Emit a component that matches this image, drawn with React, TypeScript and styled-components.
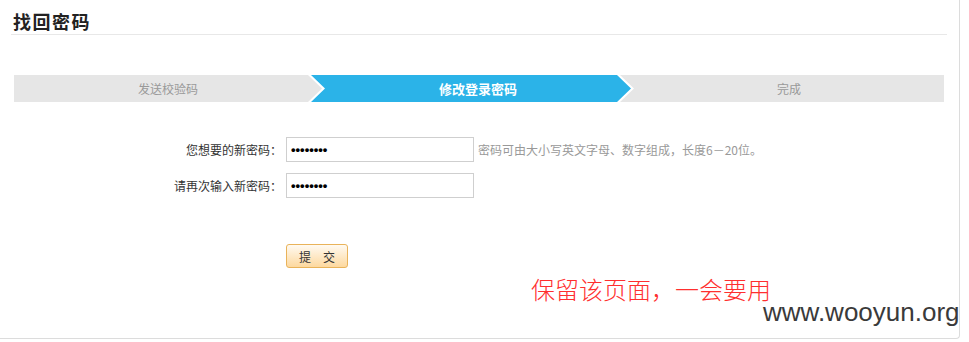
import React from 'react';
import styled, {createGlobalStyle} from "styled-components";

const GlobalStyle = createGlobalStyle`
  html, body {
    margin: 0;
    padding: 0;
    background: #fff;
    font-family: "Liberation Sans", "Noto Sans CJK SC", sans-serif;
  }
`

type StepProps = {
    active?: boolean
    first?: boolean
    last?: boolean
    w?: string
}

const steps = [
    {label: "发送校验码", w: "308px"},
    {label: "修改登录密码", w: "320px", active: true},
    {label: "完成", w: "auto"},
]

function App() {
    return (
        <>
            <GlobalStyle/>
            <Panel>
                <Header><Title>找回密码</Title></Header>

                <Steps>
                    {steps.map((s, i) => (
                        <Step key={s.label} w={s.w} active={s.active} first={i === 0}
                              last={i === steps.length - 1}>
                            {s.label}
                        </Step>
                    ))}
                </Steps>

                <Form>
                    <Row>
                        <Label>您想要的新密码：</Label>
                        <Input type="password" readOnly defaultValue="aaaaaaaa"/>
                        <Hint>密码可由大小写英文字母、数字组成，长度6－20位。</Hint>
                    </Row>
                    <Row>
                        <Label>请再次输入新密码：</Label>
                        <Input type="password" readOnly defaultValue="aaaaaaaa"/>
                    </Row>
                    <Row>
                        <Label/>
                        <Submit>提　交</Submit>
                    </Row>
                </Form>

                <Note>保留该页面，一会要用</Note>
                <Watermark>www.wooyun.org</Watermark>
            </Panel>
        </>
    );
}

export default App;

const Panel = styled.div`
  position: relative;
  box-sizing: border-box;
  width: 960px;
  height: 339px;
  padding: 0 12px 0 11px;
  border-right: 1px solid #dcdcdc;
  border-bottom: 1px solid #dcdcdc;
  border-bottom-right-radius: 4px;
`
const Header = styled.div`
  height: 35px;
  border-bottom: 1px solid #e8e8e8;
  box-sizing: border-box;
  padding: 11px 0 0 2px;
`
const Title = styled.h2`
  margin: 0;
  font-family: "Noto Sans CJK SC", sans-serif;
  font-size: 18px;
  font-weight: 700;
  line-height: 20px;
  letter-spacing: 1.5px;
  color: #222;
`
const Steps = styled.div`
  display: flex;
  margin: 40px 3px 0 3px;
  height: 27px;
`
const Step = styled.div<StepProps>`
  flex: ${p => p.w === "auto" ? "1" : `0 0 ${p.w}`};
  margin-left: ${p => p.first ? "0" : "-11px"};
  padding-left: ${p => p.first ? "0" : "14px"};
  box-sizing: border-box;
  display: flex;
  align-items: center;
  justify-content: center;
  background: ${p => p.active ? "#2bb3e8" : "#e6e6e6"};
  color: ${p => p.active ? "#fff" : "#999"};
  font-family: "Noto Sans CJK SC", sans-serif;
  font-size: ${p => p.active ? "13px" : "12px"};
  font-weight: ${p => p.active ? 700 : 400};
  clip-path: ${p => p.first
          ? "polygon(0 0, calc(100% - 14px) 0, 100% 50%, calc(100% - 14px) 100%, 0 100%)"
          : p.last
                  ? "polygon(0 0, 100% 0, 100% 100%, 0 100%, 14px 50%)"
                  : "polygon(0 0, calc(100% - 14px) 0, 100% 50%, calc(100% - 14px) 100%, 0 100%, 14px 50%)"};
`
const Form = styled.div`
  margin-top: 35px;
  display: flex;
  flex-direction: column;
  gap: 11px;

  & > div:last-child {
    margin-top: 35px;
  }
`
const Row = styled.div`
  display: flex;
  align-items: center;
  gap: 4px;
`
const Label = styled.label`
  flex: 0 0 271px;
  text-align: right;
  font-family: "Noto Sans CJK SC", sans-serif;
  font-size: 12px;
  color: #333;
`
const Input = styled.input`
  box-sizing: border-box;
  width: 188px;
  height: 25px;
  border: 1px solid #cfcfcf;
  padding: 0 4px;
  font-family: "Liberation Sans", sans-serif;
  font-size: 13px;
  font-weight: 700;
  letter-spacing: 0;
  color: #000;
  outline: none;
`
const Hint = styled.span`
  font-family: "Noto Sans CJK SC", sans-serif;
  font-size: 12px;
  color: #999;
`
const Submit = styled.button`
  box-sizing: border-box;
  width: 62px;
  height: 24px;
  border: 1px solid #e9b35a;
  border-radius: 3px;
  background: linear-gradient(#fffaf1, #fdd99f);
  font-family: "Noto Sans CJK SC", sans-serif;
  font-size: 12px;
  color: #333;
  padding: 0;
  cursor: pointer;
`
const Note = styled.div`
  position: absolute;
  left: 531px;
  top: 275px;
  font-family: "Noto Sans CJK SC", sans-serif;
  font-size: 24px;
  font-weight: 300;
  line-height: 28px;
  color: #ff2f2f;
`
const Watermark = styled.div`
  position: absolute;
  left: 763px;
  top: 297px;
  font-family: "Liberation Sans", sans-serif;
  font-size: 26px;
  line-height: 30px;
  color: #3a3a3a;
  white-space: nowrap;
`
